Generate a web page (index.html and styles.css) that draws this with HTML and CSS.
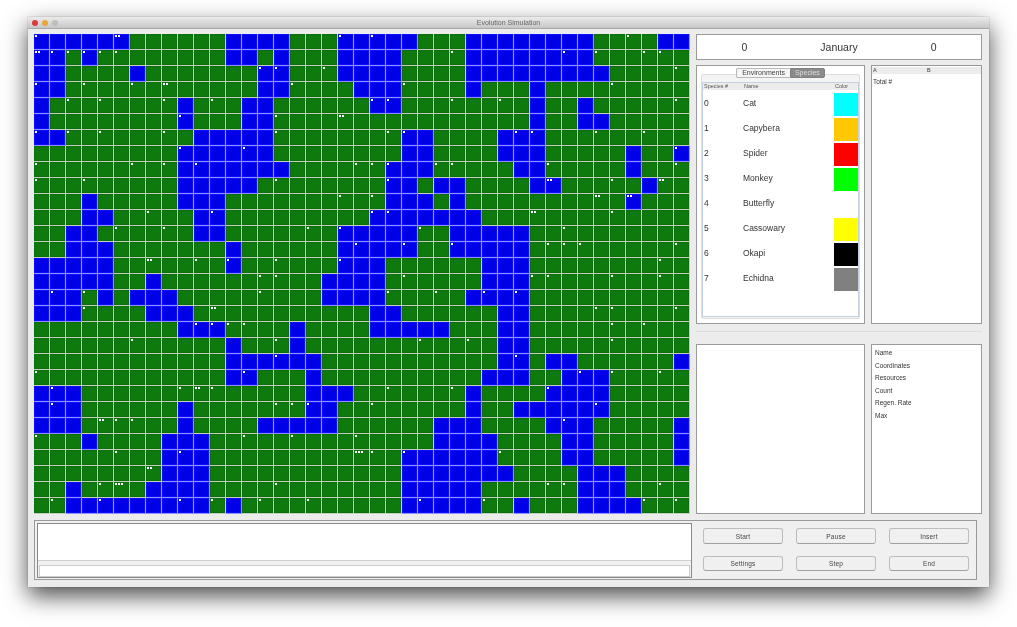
FILE: index.html
```html
<!DOCTYPE html>
<html lang="en">
<head>
  <meta charset="UTF-8" />
  <title>Evolution Simulation</title>
  <link rel="stylesheet" href="styles.css">
</head>
<body>
  <div class="window">
    <div class="titlebar">
      <div class="lights">
        <span class="light red"></span>
        <span class="light amber"></span>
        <span class="light off"></span>
      </div>
      <div class="title">Evolution Simulation</div>
    </div>

    <div class="main">
      <div id="world" class="world"></div>

      <div class="side">
        <div class="panel date-box">
          <div>0</div>
          <div>January</div>
          <div>0</div>
        </div>

        <div class="side-row upper">
          <div class="panel tabs-panel">
            <div class="tabs">
              <div class="tab">Environments</div>
              <div class="tab active">Species</div>
            </div>
            <div class="tab-pane">
              <div class="species-table">
                <div class="table-head">
                  <div class="col-num">Species #</div>
                  <div class="col-name">Name</div>
                  <div class="col-color">Color</div>
                </div>
                <div class="species-row"><div class="col-num">0</div><div class="col-name">Cat</div><div class="swatch cyan"></div></div>
                <div class="species-row"><div class="col-num">1</div><div class="col-name">Capybera</div><div class="swatch orange"></div></div>
                <div class="species-row"><div class="col-num">2</div><div class="col-name">Spider</div><div class="swatch red"></div></div>
                <div class="species-row"><div class="col-num">3</div><div class="col-name">Monkey</div><div class="swatch lime"></div></div>
                <div class="species-row"><div class="col-num">4</div><div class="col-name">Butterfly</div><div class="swatch white"></div></div>
                <div class="species-row"><div class="col-num">5</div><div class="col-name">Cassowary</div><div class="swatch yellow"></div></div>
                <div class="species-row"><div class="col-num">6</div><div class="col-name">Okapi</div><div class="swatch black"></div></div>
                <div class="species-row"><div class="col-num">7</div><div class="col-name">Echidna</div><div class="swatch gray"></div></div>
              </div>
            </div>
          </div>

          <div class="panel totals-panel">
            <div class="totals-head">
              <div class="totals-a">A</div>
              <div>B</div>
            </div>
            <div class="totals-row">Total #</div>
          </div>
        </div>

        <div class="divider"></div>

        <div class="side-row lower">
          <div class="panel"></div>
          <div class="panel info-list">
            <div>Name</div>
            <div>Coordinates</div>
            <div>Resources</div>
            <div>Count</div>
            <div>Regen. Rate</div>
            <div>Max</div>
          </div>
        </div>
      </div>
    </div>

    <div class="bottom-panel">
      <div class="log-box">
        <div class="log-text"></div>
        <div class="log-foot">
          <div class="log-input"></div>
        </div>
      </div>
      <div class="controls">
        <button type="button">Start</button>
        <button type="button">Pause</button>
        <button type="button">Insert</button>
        <button type="button">Settings</button>
        <button type="button">Step</button>
        <button type="button">End</button>
      </div>
    </div>
  </div>

  <script src="script.js"></script>
</body>
</html>
```

FILE: styles.css
```css
body {
  font-family: "Liberation Sans", Arial, sans-serif;
  background-color: white;
  margin: 0;
  padding: 0;
  height: 627px;
  overflow: hidden;
  color: #333;
}

.window {
  width: 961px;
  height: 570px;
  margin: 17px 0 0 28px;
  background-color: #ececec;
  box-shadow: 0 9px 22px rgba(0, 0, 0, 0.7), 0 0 1px rgba(0, 0, 0, 0.4);
  display: flex;
  flex-direction: column;
}

/* the original is a scaled down retina shot, everything is a bit soft */
.titlebar,
.main,
.bottom-panel {
  filter: blur(0.4px);
}

.titlebar {
  height: 11px;
  display: flex;
  align-items: center;
  position: relative;
  background: linear-gradient(#ececec, #c6c6c6);
  border-bottom: 1px solid #a8a8a8;
}

.lights {
  display: flex;
  gap: 4px;
  padding-left: 4px;
}

.light {
  width: 6px;
  height: 6px;
  border-radius: 50%;
}

.light.red {
  background-color: #e0383c;
}

.light.amber {
  background-color: #e6a83a;
}

.light.off {
  background-color: #bdbdbd;
}

.title {
  position: absolute;
  left: 0;
  right: 0;
  text-align: center;
  font-size: 7px;
  color: #666;
}

.main {
  display: flex;
  gap: 6px;
  padding: 5px 7px 0 6px;
}

.world {
  display: grid;
  grid-template-columns: repeat(41, 16px);
  grid-template-rows: repeat(30, 16px);
  width: 656px;
  height: 480px;
  flex: none;
}

.cell {
  box-sizing: border-box;
  display: flex;
  align-items: flex-start;
  gap: 1px;
  padding: 1px 0 0 1px;
  background-color: #0e7a0e;
  border-right: 1px solid #bfd1ba;
  border-bottom: 1px solid #bfd1ba;
  box-shadow: inset 0 0 0 1px #0d6e0d;
}

.cell.water {
  background-color: #0000e8;
  border-color: #9090ff;
  box-shadow: inset 0 0 0 1px #0c0cff;
}

.creature {
  width: 2px;
  height: 2px;
  background-color: white;
  flex: none;
}

.side {
  width: 286px;
  display: flex;
  flex-direction: column;
}

.panel {
  box-sizing: border-box;
  background-color: white;
  border: 1px solid #9a9a9a;
}

.date-box {
  height: 26px;
  display: grid;
  grid-template-columns: repeat(3, 1fr);
  align-items: center;
  text-align: center;
  font-size: 10.5px;
}

.side-row {
  display: flex;
  gap: 6px;
}

.side-row .panel:first-child {
  width: 169px;
}

.side-row .panel:last-child {
  width: 111px;
}

.upper {
  height: 259px;
  margin-top: 5px;
}

.lower {
  height: 170px;
}

.divider {
  height: 1px;
  margin: 7px 0 12px;
  background-color: #dcdcdc;
}

.tabs-panel {
  padding: 2px 4px 4px 4px;
}

.tabs {
  display: flex;
  justify-content: center;
  position: relative;
  font-size: 7px;
}

.tab {
  box-sizing: border-box;
  height: 10px;
  line-height: 8px;
  padding: 0 5px;
  background-color: #f6f6f6;
  border: 1px solid #b8b8b8;
  border-right: none;
  border-radius: 2px 0 0 2px;
  color: #444;
}

.tab.active {
  padding: 0 4px;
  background-color: #8a8a8a;
  border: 1px solid #808080;
  border-radius: 0 2px 2px 0;
  color: #ddd;
}

.tab-pane {
  box-sizing: border-box;
  height: 245px;
  margin-top: -4px;
  padding: 7px 0 1px 0;
  background-color: #f4f4f4;
  border: 1px solid #dedede;
  border-radius: 2px;
}

.species-table {
  box-sizing: border-box;
  height: 235px;
  background-color: white;
  border: 1px solid #c2d0e0;
}

.table-head {
  display: flex;
  height: 7px;
  line-height: 7px;
  font-size: 5.5px;
  background-color: #ececec;
  color: #555;
  margin-bottom: 2px;
}

.species-row {
  display: flex;
  align-items: center;
  height: 25px;
  font-size: 8.5px;
}

.species-row .col-num,
.species-row .col-name {
  margin-bottom: 4px;
}

.col-num {
  width: 40px;
  padding-left: 1px;
  box-sizing: border-box;
}

.col-name {
  width: 91px;
  box-sizing: border-box;
}

.table-head .col-num,
.table-head .col-name,
.table-head .col-color {
  padding-left: 1px;
}

.swatch {
  width: 24px;
  height: 23px;
}

.cyan { background-color: #00ffff; }
.orange { background-color: #ffc800; }
.red { background-color: #ff0000; }
.lime { background-color: #00ff00; }
.white { background-color: #ffffff; }
.yellow { background-color: #ffff00; }
.black { background-color: #000000; }
.gray { background-color: #808080; }

.totals-panel {
  padding-top: 1px;
  font-size: 6.5px;
}

.totals-head {
  display: flex;
  height: 7px;
  line-height: 7px;
  font-size: 5.5px;
  background-color: #ececec;
  margin-bottom: 4px;
}

.totals-a {
  width: 55px;
  padding-left: 1px;
  box-sizing: border-box;
}

.totals-row {
  padding-left: 1px;
}

.info-list {
  padding: 2px 0 0 3px;
  font-size: 6.5px;
  line-height: 12.5px;
}

.bottom-panel {
  box-sizing: border-box;
  width: 943px;
  height: 60px;
  margin: 6px 0 0 6px;
  padding: 2px 0 2px 2px;
  display: flex;
  border: 1px solid #9a9a9a;
  background-color: #f0f0f0;
}

.log-box {
  box-sizing: border-box;
  flex: none;
  width: 655px;
  height: 55px;
  border: 1px solid #888;
  background-color: #f2f2f2;
}

.log-text {
  height: 36px;
  background-color: white;
  border-bottom: 1px solid #cfcfcf;
}

.log-foot {
  padding: 4px 1px 0 1px;
}

.log-input {
  box-sizing: border-box;
  height: 12px;
  background-color: white;
  border: 1px solid #cccccc;
}

.controls {
  display: grid;
  grid-template-columns: repeat(3, 80px);
  grid-template-rows: 16px 15px;
  column-gap: 13px;
  row-gap: 12px;
  margin: 5px 0 0 11px;
}

.controls button {
  font-family: inherit;
  font-size: 6.5px;
  letter-spacing: 0.2px;
  padding: 0;
  color: #444;
  background-color: #f0f0f0;
  border: 1px solid #bdbdbd;
  border-bottom-color: #a0a0a0;
  border-radius: 3px;
}
```

FILE: script.js
```js
const ROWS = 30;
const COLS = 41;

// blue cells per row, as column ranges
const water = [
  "0-5 12-15 19-23 27-34 39-40",
  "0-1 3 12-13 15 19-22 27-34",
  "0-1 6 14-15 19-22 27-35",
  "0-1 14-15 20-22 27 31",
  "0 9 13-14 21-22 31 34",
  "0 9 13-14 31 34-35",
  "0-1 10-14 23-24 29-31",
  "9-14 23-24 29-31 37 40",
  "9-15 22-24 30-31 37",
  "9-13 22-23 25-26 31-32 38",
  "3 9-11 22-24 26 37",
  "3-4 10-11 21-27",
  "2-3 10-11 19-23 26-30",
  "2-4 12 19-23 26-30",
  "0-4 12 19-21 28-30",
  "0-4 7 18-21 28-30",
  "0-2 4 6-8 18-21 27-30",
  "0-2 7-9 21-22 29-30",
  "9-11 16 21-25 29-30",
  "12 16 29-30",
  "12-17 29-30 32-33 40",
  "12-13 17 28-30 33-35",
  "0-2 17-19 27 32-35",
  "0-2 9 17-18 27 30-35",
  "0-2 9 14-18 25-27 32-34 40",
  "3 8-10 25-28 33-34 40",
  "8-10 23-28 33-34 40",
  "8-10 23-29 34-36",
  "2 7-10 23-27 34-36",
  "2-10 12 23-27 30 34-37"
];

// creatures per row, "column" or "column x count"
const creatures = [
  "0 5x2 19 21 37",
  "0x2 1 2 3 4 5 26 33 35 38 39",
  "14 15 18 40",
  "0 3 6 8x2 16 23 36",
  "2 4 8 11 21 22 26 29 40",
  "9 15 19x2",
  "0 2 4 8 15 22 23 30 31 35 38",
  "9 13 40",
  "0 6 8 10 20 21 22 25 26 32 40",
  "0 3 15 22 32x2 36 39x2",
  "19 21 35x2 37x2",
  "7 11 21 22 31x2 36",
  "5 8 17 19 24 33",
  "20 23 26 32 33 34 40",
  "7x2 10 12 15 19 39",
  "14 15 23 31 32 36 39",
  "1 3 14 22 25 28 30",
  "3 11x2 35 36 40",
  "10 11 12 13 36 38",
  "6 15 24 27 36",
  "15 30",
  "0 13 34 36 39",
  "1 9 10x2 11 22 26 32",
  "1 15 16 17 21 35",
  "4x2 5 6 33",
  "0 13 16 20",
  "5 9 20x3 21 23 29",
  "7x2",
  "4 5x3 15 32 33 39",
  "1 4 9 11 14 17 24 28 38 40"
];

const world = document.getElementById("world");

for (let r = 0; r < ROWS; r++) {
  const blue = new Set();
  water[r].split(" ").forEach(part => {
    const [from, to] = part.split("-").map(Number);
    for (let c = from; c <= (to === undefined ? from : to); c++) {
      blue.add(c);
    }
  });

  const counts = {};
  creatures[r].split(" ").forEach(part => {
    const [col, count] = part.split("x").map(Number);
    counts[col] = count || 1;
  });

  for (let c = 0; c < COLS; c++) {
    const cell = document.createElement("div");
    cell.className = blue.has(c) ? "cell water" : "cell";
    for (let i = 0; i < (counts[c] || 0); i++) {
      const dot = document.createElement("div");
      dot.className = "creature";
      cell.appendChild(dot);
    }
    world.appendChild(cell);
  }
}
```
